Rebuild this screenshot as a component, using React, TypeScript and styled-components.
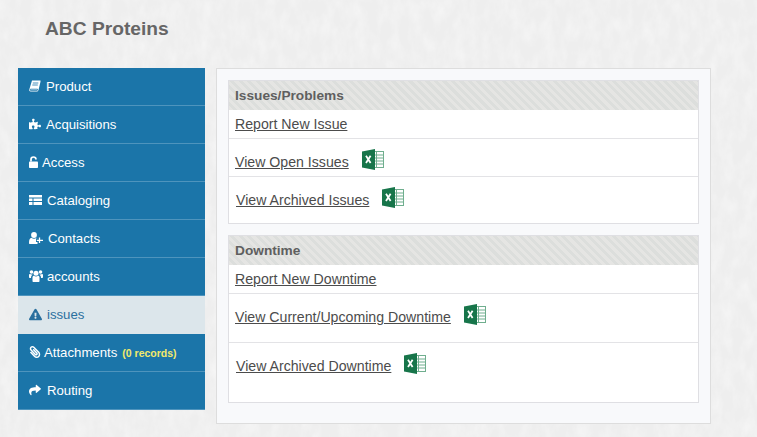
import type { ReactNode } from "react";
import styled, { createGlobalStyle } from "styled-components";
import { FaExclamationTriangle, FaPaperclip, FaPuzzlePiece, FaShare } from "react-icons/fa";

const ExcelIcon = () => (
    <ExcelSvg viewBox="0 0 22 21" aria-hidden="true">
        <rect x="10" y="2.500" width="11.500" height="16" fill="#fff" stroke="#6fae8e" />
        <path d="M14.500 3v15M10 6h11M10 9h11M10 12h11M10 15h11" stroke="#6fae8e" strokeWidth="1" fill="none" />
        <path d="M0 2.500 13 0v21L0 18.500z" fill="#17754a" />
        <path d="M4 6.800 8.600 14M8.600 6.800 4 14" stroke="#fff" strokeWidth="1.800" fill="none" />
    </ExcelSvg>
);

const BookIcon = () => (
    <MenuSvg width="12" height="12" viewBox="0 0 12 12" aria-hidden="true">
        <path d="M3 .5h8.500v1.200L9.500 10c-.2.900-.8 1.500-1.700 1.500H1.600C.6 11.500 0 10.500.3 9.500z" fill="#fff" />
        <path d="M1.400 9.200h7.200l-.3 1.200H1.400zM3.800 3h5.500M3.300 5h5.500" stroke="#1b75a9" strokeWidth=".8" fill="none" />
    </MenuSvg>
);

const UnlockIcon = () => (
    <MenuSvg width="9" height="12" viewBox="0 0 9 12" aria-hidden="true">
        <path d="M2 5.500V3.400C2 2 3 1 4.500 1S7 2 7 3.400" stroke="#fff" strokeWidth="1.700" fill="none" />
        <rect x="0" y="5.500" width="9" height="6.500" rx=".8" fill="#fff" />
    </MenuSvg>
);

const TableIcon = () => (
    <MenuSvg width="13" height="11" viewBox="0 0 13 11" aria-hidden="true">
        <path d="M0 0h13v2.500H0zM0 3.500h3.500V6H0zM4.500 3.500H13V6H4.500zM0 7h3.500v3H0zM4.500 7H13v3H4.500z" fill="#fff" />
    </MenuSvg>
);

const ContactIcon = () => (
    <MenuSvg width="14" height="12" viewBox="0 0 14 12" aria-hidden="true">
        <circle cx="5" cy="3" r="2.900" fill="#fff" />
        <path d="M0 11c0-3.200.8-5 2.500-5.200C3.200 6.400 4 6.700 5 6.700s1.800-.3 2.500-.9c.4 0 .7.200 1 .5H7v3.700h1.500V12H1C.4 12 0 11.700 0 11z" fill="#fff" />
        <path d="M10.500 5.500V11M7.800 8.300h6.200" stroke="#fff" strokeWidth="1.300" fill="none" />
    </MenuSvg>
);

const GroupIcon = () => (
    <MenuSvg width="14" height="12" viewBox="0 0 14 12" aria-hidden="true">
        <circle cx="7" cy="3.200" r="2.500" fill="#fff" />
        <circle cx="2.500" cy="2" r="1.800" fill="#fff" />
        <circle cx="11.500" cy="2" r="1.800" fill="#fff" />
        <path d="M3.500 7.500C3.500 6.300 4.200 5.700 5 5.700c.5.500 1.200.8 2 .8s1.500-.3 2-.8c.8 0 1.500.6 1.500 1.800V11c0 .6-.4 1-1 1h-5c-.6 0-1-.4-1-1z" fill="#fff" />
        <path d="M0 5.300C0 4.500.4 4 1 4c.4.300.9.500 1.500.5.400 0 .7 0 1-.2-.1.500-.3 1-1 1.500-.4.500-.5 1.200-.5 2.200H.8C.3 8 0 7.700 0 7.300z" fill="#fff" />
        <path d="M14 5.300C14 4.500 13.600 4 13 4c-.4.300-.9.500-1.500.5-.4 0-.7 0-1-.2.100.500.300 1 1 1.500.4.500.5 1.200.5 2.200h1.200c.5 0 .8-.3.8-.7z" fill="#fff" />
    </MenuSvg>
);

const AttachIcon = () => <ClipGlyph size={12} />;

type MenuEntry = {
    label: string;
    icon: ReactNode;
    slot: number;
    active?: boolean;
    note?: string;
};

const menu: MenuEntry[] = [
    {label: "Product", icon: <BookIcon />, slot: 17},
    {label: "Acquisitions", icon: <FaPuzzlePiece size={12} />, slot: 17},
    {label: "Access", icon: <UnlockIcon />, slot: 13},
    {label: "Cataloging", icon: <TableIcon />, slot: 18},
    {label: "Contacts", icon: <ContactIcon />, slot: 19},
    {label: "accounts", icon: <GroupIcon />, slot: 18},
    {label: "issues", icon: <FaExclamationTriangle size={13} />, slot: 18, active: true},
    {label: "Attachments", icon: <AttachIcon />, slot: 15, note: "(0 records)"},
    {label: "Routing", icon: <FaShare size={12} />, slot: 18},
];

type LinkEntry = {
    label: string;
    height: number;
    top: number;
    nudge?: number;
    excel?: boolean;
};

const sections: {title: string; links: LinkEntry[]}[] = [
    {
        title: "Issues/Problems",
        links: [
            {label: "Report New Issue", height: 29, top: 6},
            {label: "View Open Issues", height: 38, top: 15, excel: true},
            {label: "View Archived Issues", height: 46, top: 15, nudge: 1, excel: true},
        ],
    },
    {
        title: "Downtime",
        links: [
            {label: "Report New Downtime", height: 29, top: 6},
            {label: "View Current/Upcoming Downtime", height: 49, top: 15, excel: true},
            {label: "View Archived Downtime", height: 59, top: 15, nudge: 1, excel: true},
        ],
    },
];

const App = () => {
    return (
        <>
            <GlobalStyle />
            <Page>
                <Title>ABC Proteins</Title>
                <Columns>
                    <SideMenu>
                        {menu.map((item) => (
                            <MenuItem key={item.label} $active={item.active}>
                                <IconSlot $width={item.slot}>{item.icon}</IconSlot>
                                {item.label}
                                {item.note && <Note>{item.note}</Note>}
                            </MenuItem>
                        ))}
                    </SideMenu>
                    <MainPanel>
                        {sections.map((section) => (
                            <Section key={section.title}>
                                <SectionHeader>{section.title}</SectionHeader>
                                {section.links.map((link) => (
                                    <LinkRow
                                        key={link.label}
                                        $height={link.height}
                                        $top={link.top}
                                        $nudge={link.nudge ?? 0}
                                    >
                                        <RowLink href="#">{link.label}</RowLink>
                                        {link.excel && <ExcelIcon />}
                                    </LinkRow>
                                ))}
                            </Section>
                        ))}
                    </MainPanel>
                </Columns>
            </Page>
        </>
    );
};

export default App;

const GlobalStyle = createGlobalStyle`
    html, body {
        margin: 0;
        padding: 0;
        background: #efefef;
        font-family: "Liberation Sans", Arial, sans-serif;
    }
`;

const paper = encodeURIComponent(
    `<svg xmlns="http://www.w3.org/2000/svg" width="757" height="437"><filter id="n"><feTurbulence type="fractalNoise" baseFrequency="0.09 0.05" numOctaves="4" seed="4"/><feColorMatrix values="0 0 0 0 1 0 0 0 0 1 0 0 0 0 1 0.700 0 0 0 -0.250"/></filter><rect width="757" height="437" filter="url(#n)"/></svg>`,
);

const Page = styled.div`
    width: 757px;
    height: 437px;
    overflow: hidden;
    box-sizing: border-box;
    padding: 0 46px 0 18px;
    background-color: #eeeeee;
    background-image: url("data:image/svg+xml,${paper}");
`;

const Title = styled.h1`
    margin: 0;
    padding: 18px 0 0 27px;
    height: 68px;
    box-sizing: border-box;
    font-size: 19.200px;
    line-height: 22px;
    font-weight: 700;
    color: #666666;
`;

const Columns = styled.div`
    display: flex;
    align-items: flex-start;
    gap: 11px;
`;

const SideMenu = styled.nav`
    width: 187px;
    flex: none;
    display: flex;
    flex-direction: column;
`;

const MenuItem = styled.div<{$active?: boolean}>`
    display: flex;
    align-items: center;
    box-sizing: border-box;
    height: 38px;
    padding-left: 11px;
    font-size: 13.200px;
    color: ${(p) => (p.$active ? "#2a6f9e" : "#ffffff")};
    background: ${(p) => (p.$active ? "#dce6eb" : "#1b75a9")};
    border-bottom: 1px solid ${(p) => (p.$active ? "#dce6eb" : "#4e94bd")};
`;

const IconSlot = styled.span<{$width: number}>`
    display: inline-flex;
    align-items: center;
    flex: none;
    width: ${(p) => p.$width}px;
    margin-top: -1px;
`;

const MenuSvg = styled.svg`
    display: block;
`;

const ClipGlyph = styled(FaPaperclip)`
    transform: scaleX(-1);
`;

const Note = styled.span`
    margin-left: 5px;
    font-size: 10.500px;
    font-weight: 700;
    color: #f2ea6c;
`;

const MainPanel = styled.main`
    width: 495px;
    height: 356px;
    flex: none;
    box-sizing: border-box;
    display: flex;
    flex-direction: column;
    gap: 11px;
    padding: 11px;
    background: #f8f9fb;
    border: 1px solid #dddddd;
`;

const Section = styled.section`
    background: #ffffff;
    border: 1px solid #dfdfe3;
`;

const SectionHeader = styled.div`
    height: 29px;
    box-sizing: border-box;
    padding-left: 6px;
    font-size: 13.700px;
    line-height: 29px;
    font-weight: 700;
    color: #5f5f5f;
    background: repeating-linear-gradient(45deg, #e5e5e3 0 3px, #dcdedc 3px 6px);
`;

const LinkRow = styled.div<{$height: number; $top: number; $nudge: number}>`
    display: flex;
    align-items: flex-start;
    gap: 13px;
    box-sizing: border-box;
    height: ${(p) => p.$height}px;
    padding: ${(p) => p.$top}px 0 0 ${(p) => 6 + p.$nudge}px;
    border-bottom: 1px solid #e3e3e6;

    &:last-child {
        border-bottom: none;
    }
`;

const RowLink = styled.a`
    font-size: 14.150px;
    line-height: 17px;
    color: #4c4c4c;
    text-decoration: underline;
`;

const ExcelSvg = styled.svg`
    width: 22px;
    height: 21px;
    flex: none;
    margin-top: -5px;
`;
